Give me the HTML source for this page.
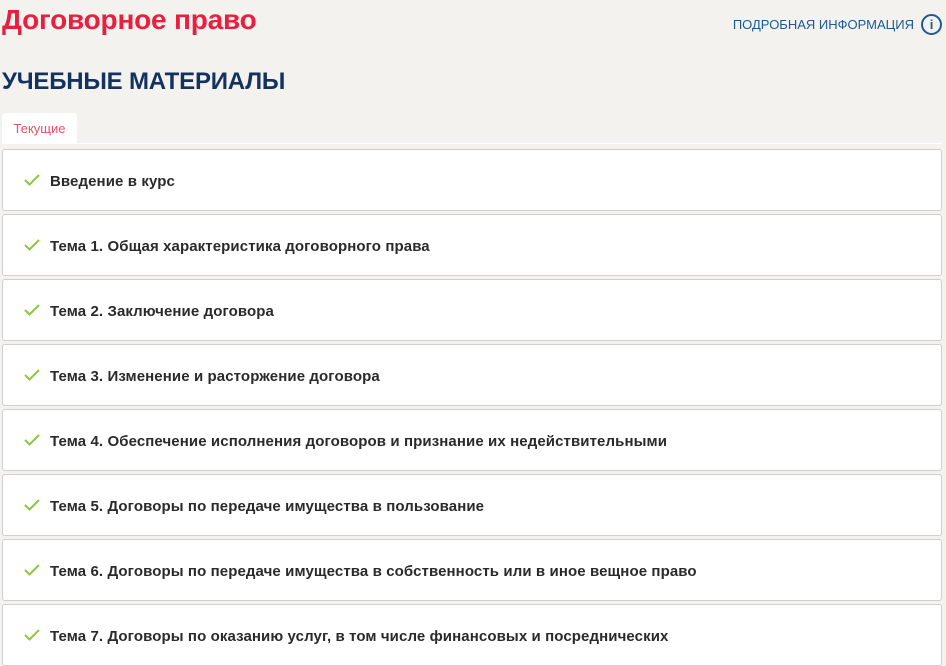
<!DOCTYPE html>
<html><head><meta charset="utf-8"><style>
body{margin:0;width:946px;height:666px;overflow:hidden;background:#f3f2ef;font-family:"Liberation Sans",sans-serif;position:relative}
.t{position:absolute;left:2px;top:4px;font-size:28px;font-weight:bold;color:#e8203f;letter-spacing:-0.2px}
.i{position:absolute;right:32px;top:17px;font-size:13px;color:#1d5a94}
.ic{position:absolute;left:921px;top:14px;width:21px;height:21px;border:2px solid #1d5a94;border-radius:50%;box-sizing:border-box;color:#1d5a94;font-weight:bold;font-size:13px;text-align:center;line-height:17px}
.h{position:absolute;left:2px;top:68px;font-size:24px;font-weight:bold;color:#13325f;letter-spacing:-0.2px}
.tab{position:absolute;left:2px;top:113px;width:75px;height:30px;background:#fff;border-radius:4px 4px 0 0;color:#e8506a;font-size:13px;text-align:center;line-height:31px}
.ln{position:absolute;left:2px;top:143px;width:940px;height:1px;background:#fff}
.c{position:absolute;left:2px;width:940px;height:62px;background:#fff;border:1px solid #cfcfcf;border-radius:3px;box-sizing:border-box}
.c svg{position:absolute;left:21px;top:24px}
.c span{position:absolute;left:47px;top:23px;font-size:15px;font-weight:bold;color:#2a2a2a;letter-spacing:0.1px}
</style></head><body>
<div class="t">Договорное право</div>
<div class="i">ПОДРОБНАЯ ИНФОРМАЦИЯ</div>
<div class="ic">i</div>
<div class="h">УЧЕБНЫЕ МАТЕРИАЛЫ</div>
<div class="tab">Текущие</div>
<div class="ln"></div>
<div class="c" style="top:149px"><svg width="16" height="12"><path d="M1 6l4.5 4.5L15 1" stroke="#8cc63f" stroke-width="2" fill="none"/></svg><span>Введение в курс</span></div>
<div class="c" style="top:214px"><svg width="16" height="12"><path d="M1 6l4.5 4.5L15 1" stroke="#8cc63f" stroke-width="2" fill="none"/></svg><span>Тема 1. Общая характеристика договорного права</span></div>
<div class="c" style="top:279px"><svg width="16" height="12"><path d="M1 6l4.5 4.5L15 1" stroke="#8cc63f" stroke-width="2" fill="none"/></svg><span>Тема 2. Заключение договора</span></div>
<div class="c" style="top:344px"><svg width="16" height="12"><path d="M1 6l4.5 4.5L15 1" stroke="#8cc63f" stroke-width="2" fill="none"/></svg><span>Тема 3. Изменение и расторжение договора</span></div>
<div class="c" style="top:409px"><svg width="16" height="12"><path d="M1 6l4.5 4.5L15 1" stroke="#8cc63f" stroke-width="2" fill="none"/></svg><span>Тема 4. Обеспечение исполнения договоров и признание их недействительными</span></div>
<div class="c" style="top:474px"><svg width="16" height="12"><path d="M1 6l4.5 4.5L15 1" stroke="#8cc63f" stroke-width="2" fill="none"/></svg><span>Тема 5. Договоры по передаче имущества в пользование</span></div>
<div class="c" style="top:539px"><svg width="16" height="12"><path d="M1 6l4.5 4.5L15 1" stroke="#8cc63f" stroke-width="2" fill="none"/></svg><span>Тема 6. Договоры по передаче имущества в собственность или в иное вещное право</span></div>
<div class="c" style="top:604px"><svg width="16" height="12"><path d="M1 6l4.5 4.5L15 1" stroke="#8cc63f" stroke-width="2" fill="none"/></svg><span>Тема 7. Договоры по оказанию услуг, в том числе финансовых и посреднических</span></div>
</body></html>
